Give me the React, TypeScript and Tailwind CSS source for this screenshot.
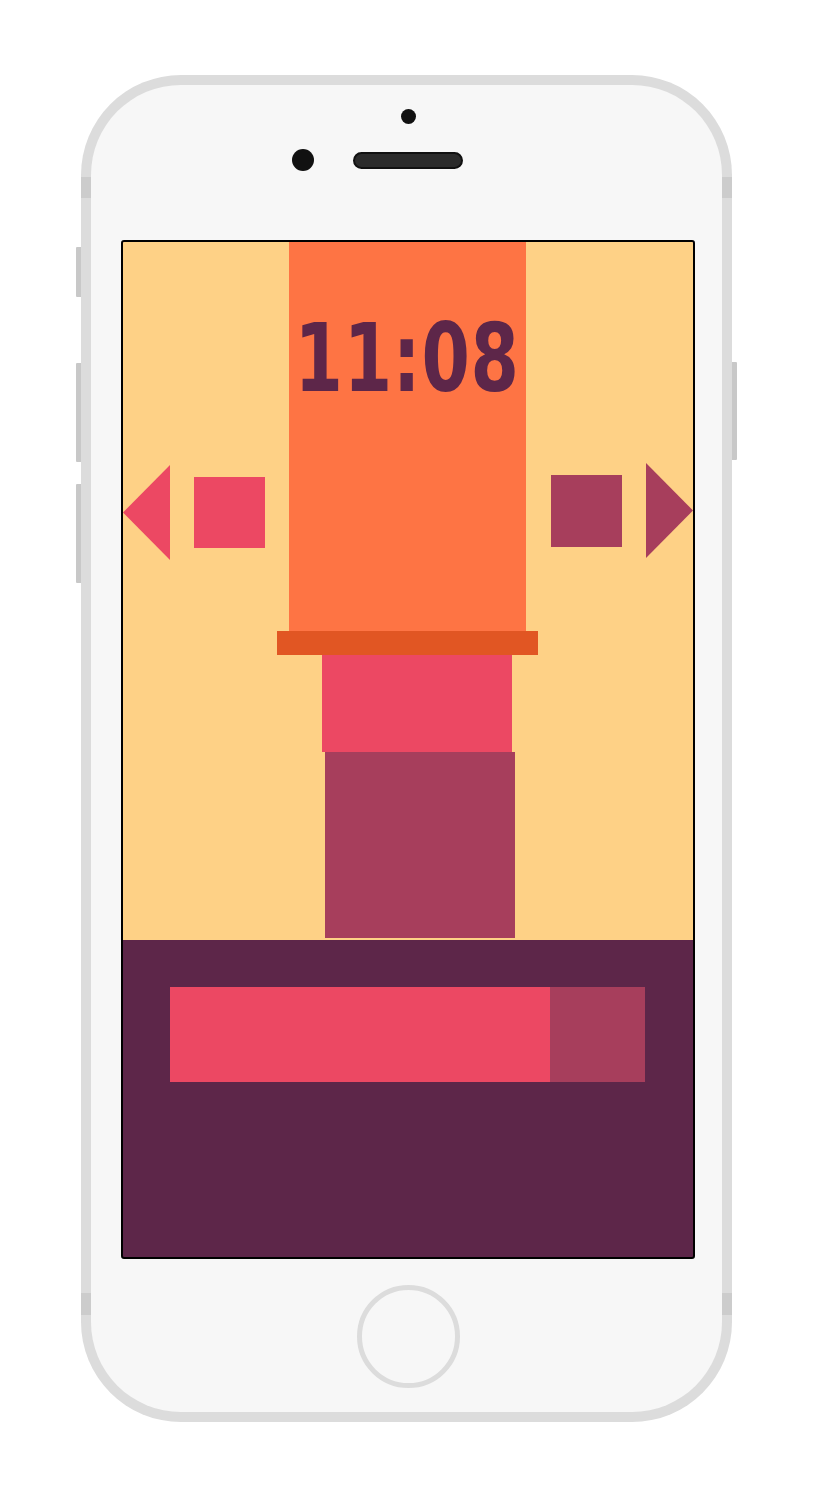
const Arrow = ({ dir, color }: { dir: "left" | "right"; color: string }) => (
  <svg width="47" height="95" viewBox="0 0 47 95" className="shrink-0">
    <polygon points={dir === "left" ? "47,0 0,47.5 47,95" : "0,0 47,47.5 0,95"} fill={color} />
  </svg>
)

const ClockScreen = () => {
  return (
    <div className="h-[1019px] w-[574px] overflow-hidden rounded-[3px] border-2 border-black bg-[#5d2649]">
      {/* upper playfield */}
      <div className="flex h-[698px] flex-col bg-[#fed186]">
        <div className="flex h-[389px]">
          <div className="flex w-[166px] items-center gap-[24px] self-start pt-[223px]">
            <Arrow dir="left" color="#ec4863" />
            <div className="h-[71px] w-[71px] bg-[#ec4863]" />
          </div>

          <div className="flex w-[237px] justify-center bg-[#fe7444] pt-[70px]">
            <span className="inline-block h-[96px] origin-top scale-x-[0.74] whitespace-nowrap font-['DejaVu_Sans',sans-serif] text-[94px] font-bold leading-none tracking-[1px] text-[#5d2649]">
              11:08
            </span>
          </div>

          <div className="flex w-[167px] items-center gap-[24px] self-start pl-[25px] pt-[221px]">
            <div className="h-[72px] w-[71px] bg-[#a73e5c]" />
            <Arrow dir="right" color="#a73e5c" />
          </div>
        </div>

        <div className="ml-[154px] h-[24px] w-[261px] bg-[#e15623]" />
        <div className="ml-[199px] h-[97px] w-[190px] bg-[#ec4863]" />
        <div className="ml-[202px] h-[186px] w-[190px] bg-[#a73e5c]" />
      </div>

      {/* lower bar */}
      <div className="pl-[47px] pt-[47px]">
        <div className="flex h-[95px] w-[475px]">
          <div className="w-[380px] bg-[#ec4863]" />
          <div className="flex-1 bg-[#a73e5c]" />
        </div>
      </div>
    </div>
  )
}

export default function App() {
  return (
    <div className="min-h-[1500px] bg-white pt-[75px]">
      <div className="relative mx-auto h-[1347px] w-[651px] rounded-[100px] bg-[#dcdcdc] p-[10px]">
        {/* side buttons */}
        <div className="absolute left-[-5px] top-[172px] h-[50px] w-[5px] rounded-l-[1px] bg-[#c8c8c8]" />
        <div className="absolute left-[-5px] top-[288px] h-[99px] w-[5px] rounded-l-[1px] bg-[#c8c8c8]" />
        <div className="absolute left-[-5px] top-[409px] h-[99px] w-[5px] rounded-l-[1px] bg-[#c8c8c8]" />
        <div className="absolute right-[-5px] top-[287px] h-[98px] w-[5px] rounded-r-[1px] bg-[#c8c8c8]" />
        {/* antenna bands */}
        <div className="absolute left-0 top-[102px] h-[21px] w-[10px] bg-[#cccccc]" />
        <div className="absolute right-0 top-[102px] h-[21px] w-[10px] bg-[#cccccc]" />
        <div className="absolute bottom-[107px] left-0 h-[22px] w-[10px] bg-[#cccccc]" />
        <div className="absolute bottom-[107px] right-0 h-[22px] w-[10px] bg-[#cccccc]" />

        <div className="flex h-full flex-col items-start rounded-[90px] bg-[#f7f7f7]">
          <div className="ml-[310px] mt-[24px] h-[15px] w-[15px] rounded-full bg-[#111111]" />

          <div className="ml-[201px] mt-[25px] flex items-center gap-[39px]">
            <div className="h-[22px] w-[22px] rounded-full bg-[#111111]" />
            <div className="h-[17px] w-[110px] rounded-full border-2 border-[#111111] bg-[#2b2b2b]" />
          </div>

          <div className="ml-[30px] mt-[69px]">
            <ClockScreen />
          </div>

          <div className="ml-[266px] mt-[26px] h-[103px] w-[103px] rounded-full border-[5px] border-[#dcdcdc]" />
        </div>
      </div>
    </div>
  )
}
